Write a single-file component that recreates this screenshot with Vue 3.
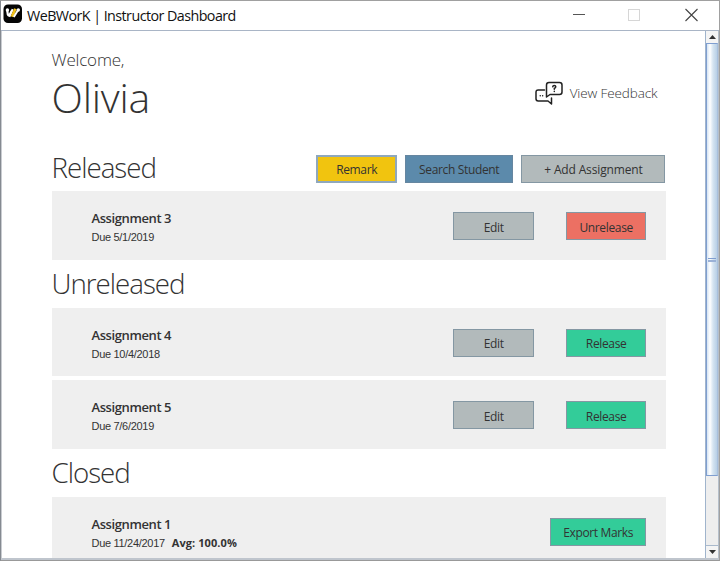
<script setup>
const sections = [
  { title: 'Released', items: [{ name: 'Assignment 3', due: '5/1/2019', actions: [['Edit', 'gray'], ['Unrelease', 'red']] }] },
  {
    title: 'Unreleased',
    items: [
      { name: 'Assignment 4', due: '10/4/2018', actions: [['Edit', 'gray'], ['Release', 'green']] },
      { name: 'Assignment 5', due: '7/6/2019', actions: [['Edit', 'gray'], ['Release', 'green']] },
    ],
  },
  { title: 'Closed', items: [{ name: 'Assignment 1', due: '11/24/2017', avg: '100.0%', actions: [['Export Marks', 'green wide']] }] },
]
</script>

<template>
  <div class="window">
    <header class="titlebar">
      <svg class="logo" width="20" height="20" viewBox="0 0 20 20">
        <rect x="0.5" y="0.5" width="18.5" height="18.5" rx="4.5" fill="#050505" />
        <path d="M4.200 6l.6 4.500q.6 1.800 1.800.2L9 6.500" fill="none" stroke="#fff" stroke-width="2.200" />
        <path d="M9.600 5.200L6.400 12.800" fill="none" stroke="#fff" stroke-width="2" />
        <path d="M12.400 4.800L9 12.800" fill="none" stroke="#f2c21a" stroke-width="2.800" />
        <path d="M10.800 13l4-6.500" fill="none" stroke="#fff" stroke-width="2" />
        <circle cx="4.400" cy="6" r="1.700" fill="#fff" />
        <circle cx="15.300" cy="6" r="1.700" fill="#fff" />
      </svg>
      <span class="caption">WeBWorK | Instructor Dashboard</span>
      <svg class="controls" width="130" height="16" viewBox="0 0 130 16">
        <path d="M1 7.5h12" stroke="#555" fill="none" />
        <rect x="56.5" y="2.5" width="11" height="11" stroke="#d6d6d6" fill="none" />
        <path d="M113.5 2l12 12m0-12l-12 12" stroke="#444" stroke-width="1.1" fill="none" />
      </svg>
    </header>
    <div class="body">
      <main class="content">
        <div class="hero">
          <div>
            <div class="welcome">Welcome,</div>
            <div class="user">Olivia</div>
          </div>
          <div class="feedback">
            <svg width="28" height="25" viewBox="0 0 28 25" fill="none" stroke="#222" stroke-width="1.5" stroke-linejoin="round" stroke-linecap="round">
              <path d="M9.5 9H3.2Q1 9 1 11.2v6.6Q1 20 3.2 20H13l3.500 3v-6" />
              <path d="M14 1.500h10.500Q27 1.500 27 4v7q0 2.500-2.500 2.500H15l-3.500 2.500V4q0-2.500 2.500-2.500z" />
              <path d="M17.700 5.800q.2-1.300 1.500-1.300 1.600 0 1.600 1.300 0 .9-1.500 1.700v.8m0 2v.2" stroke-width="1.500" />
              <path d="M5.200 14.800h.1m2.300 0h.1" stroke-width="1.400" />
            </svg>
            <span>View Feedback</span>
          </div>
        </div>
        <section v-for="(section, i) in sections" :key="section.title">
          <div class="heading">
            <h2>{{ section.title }}</h2>
            <div v-if="i === 0" class="tools">
              <button class="btn yellow">Remark</button>
              <button class="btn blue">Search Student</button>
              <button class="btn gray add">+ Add Assignment</button>
            </div>
          </div>
          <article v-for="item in section.items" :key="item.name" class="card">
            <div>
              <div class="name">{{ item.name }}</div>
              <div class="due">Due {{ item.due }}<b v-if="item.avg">Avg: {{ item.avg }}</b></div>
            </div>
            <div class="actions">
              <button v-for="[label, tone] in item.actions" :key="label" class="btn" :class="tone">{{ label }}</button>
            </div>
          </article>
        </section>
      </main>
      <aside class="scrollbar">
        <div class="arrow"><svg width="7" height="4"><path d="M0 4l3.500-4 3.500 4z" fill="#333" /></svg></div>
        <div class="thumb"><i></i></div>
        <div class="track"></div>
        <div class="arrow"><svg width="7" height="4"><path d="M0 0h7l-3.500 4z" fill="#333" /></svg></div>
      </aside>
    </div>
  </div>
</template>

<style>
body { overflow: hidden; }
</style>

<style scoped>
* { box-sizing: border-box; }
.window {
  width: 720px; height: 561px; display: flex; flex-direction: column; background: #fff;
  border: 1px solid #a0a0a0; border-left-color: #858a91; border-bottom-color: #999;
  font-family: "Open Sans", "Noto Sans", sans-serif; color: #333;
}
.titlebar { height: 30px; flex: none; display: flex; align-items: center; padding-left: 2px; border-bottom: 1px solid #a9b5c6; }
.logo { margin-bottom: 3px; }
.caption { font-size: 14.300px; letter-spacing: -0.550px; margin-left: 4px; color: #111; white-space: nowrap; }
.controls { margin-left: auto; margin-right: 17px; margin-bottom: 2px; }
.body { flex: 1; min-height: 0; display: flex; border-left: 1px solid #c9ccd1; border-bottom: 2px solid #bfc5cd; }
.content { flex: 1; padding: 0 38.600px 0 49.500px; overflow: hidden; }
.hero { height: 118.400px; display: flex; justify-content: space-between; padding-top: 17px; }
.welcome { font-size: 17px; line-height: 24px; font-weight: 300; letter-spacing: -0.200px; }
.user { font-size: 41px; line-height: 50px; font-weight: 300; letter-spacing: -0.200px; }
.feedback { display: flex; align-items: center; height: 30px; gap: 7px; margin: 30px 9px 0 0; font-size: 13.500px; font-weight: 300; letter-spacing: -0.120px; white-space: nowrap; }
.heading { height: 42px; display: flex; justify-content: space-between; align-items: flex-start; }
section + section .heading { height: 48.200px; padding-top: 5px; }
h2 { margin: 0; font-size: 27.700px; line-height: 36px; font-weight: 300; letter-spacing: -1px; }
.tools { display: flex; gap: 8px; padding-top: 5.600px; margin-right: 1px; }
.btn {
  width: 80.500px; height: 28px; padding: 2px 0 0; border: 1px solid #8497a3; border-radius: 0;
  font: 12px "Open Sans", "Noto Sans", sans-serif; letter-spacing: -0.350px; color: #333; white-space: nowrap;
}
.yellow { background: #f1c40f; border: 2px solid #8fa8bd; }
.blue { background: #5c8aab; width: 108.500px; border-color: #6686a0; }
.gray { background: #b2babb; }
.add { width: 144px; letter-spacing: -0.150px; }
.red { background: #ec7063; }
.green { background: #33cc99; }
.wide { width: 96.500px; }
.card { height: 68.400px; background: #efefef; display: flex; justify-content: space-between; padding: 18px 20px 0 40px; }
.card + .card { margin-top: 4px; }
.name { font-size: 13px; line-height: 18px; font-weight: 600; letter-spacing: -0.400px; }
.due { font: 11px/18px "Liberation Sans", Arial, sans-serif; letter-spacing: -0.300px; margin-top: 1px; }
.due b { display: inline-block; font: 700 11px/16px "Open Sans", sans-serif; letter-spacing: 0.080px; margin-left: 7px; }
.actions { display: flex; gap: 32px; padding-top: 2.700px; }
.scrollbar { width: 14px; flex: none; display: flex; flex-direction: column; border-left: 1px solid #a0b4cc; background: #eee; border-right: 1px solid #b5bfca; }
.arrow { height: 12px; flex: none; display: flex; align-items: center; justify-content: center; background: #f4f4f4; }
.thumb {
  height: 433px; border: 1px solid #7f9ed0; border-right-color: #a9c0dc; display: flex; align-items: center; justify-content: center;
  background: linear-gradient(90deg, #d5e4f3, #fff 30%, #d5e4f1 60%, #b8cfe5);
}
.thumb i { width: 8px; height: 4px; border-top: 1px solid #7f9ed0; border-bottom: 2px solid #9ab1d6; }
.track { flex: 1; border-bottom: 1px solid #a9b9cc; }
</style>
